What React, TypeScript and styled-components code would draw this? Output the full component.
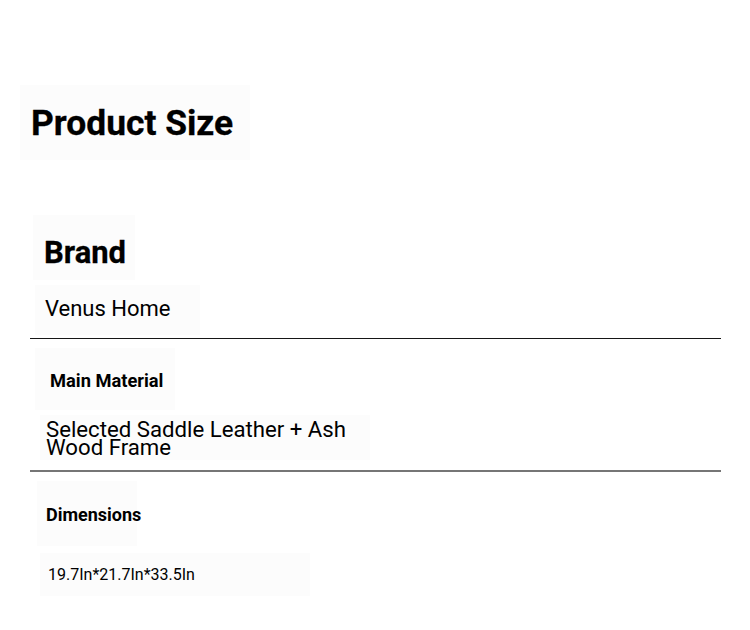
import React from 'react'
import styled, { createGlobalStyle } from 'styled-components';

const GlobalStyle = createGlobalStyle`
  body {
    margin: 0;
    background: #ffffff;
    font-family: Roboto, "Liberation Sans", sans-serif;
    color: #000000;
  }
`;

interface SpecItem {
  label: string;
  value: string;
};

const specs: SpecItem[] = [
  { label: 'Brand', value: 'Venus Home' },
  { label: 'Main Material', value: 'Selected Saddle Leather + Ash Wood Frame' },
  { label: 'Dimensions', value: '19.7In*21.7In*33.5In' },
];

const App = () => {
  return (
    <Page>
      <GlobalStyle />
      <TitleBox>
        <Title>Product Size</Title>
      </TitleBox>
      <SpecList>
        <SpecRow>
          <BrandLabel>{specs[0].label}</BrandLabel>
          <BrandValue>{specs[0].value}</BrandValue>
        </SpecRow>
        <Divider $dark />
        <SpecRow>
          <MaterialLabel>{specs[1].label}</MaterialLabel>
          <MaterialValue>{specs[1].value}</MaterialValue>
        </SpecRow>
        <Divider />
        <SpecRow>
          <DimensionLabel>{specs[2].label}</DimensionLabel>
          <DimensionValue>{specs[2].value}</DimensionValue>
        </SpecRow>
      </SpecList>
    </Page>
  )
};

export const Page = styled.div`
  width: 750px;
  height: 630px;
  overflow: hidden;
  padding-top: 85px;
  box-sizing: border-box;
`;

export const TitleBox = styled.div`
  width: 230px;
  height: 75px;
  margin-left: 20px;
  padding: 20px 0 0 11px;
  box-sizing: border-box;
  background: #fcfcfc;
`;

export const Title = styled.h2`
  margin: 0;
  font-size: 35.4px;
  font-weight: 700;
  line-height: 36px;
  -webkit-text-stroke: 0.3px #000;
`;

export const SpecList = styled.div`
  width: 691px;
  margin: 55px 0 0 30px;
  display: flex;
  flex-direction: column;
`;

export const SpecRow = styled.div`
  display: flex;
  flex-direction: column;
  align-items: flex-start;
`;

export const Divider = styled.div<{ $dark?: boolean }>`
  width: 100%;
  height: ${(props) => (props.$dark ? '1px' : '2px')};
  background: ${(props) => (props.$dark ? '#161616' : '#767676')};
  margin-top: ${(props) => (props.$dark ? '3px' : '10px')};
`;

const Cell = styled.div`
  box-sizing: border-box;
  background: #fcfcfc;
  line-height: 1;
`;

export const BrandLabel = styled(Cell)`
  margin-left: 3px;
  width: 102px;
  height: 65px;
  padding: 22px 0 0 11px;
  font-size: 31px;
  font-weight: 700;
  -webkit-text-stroke: 0.3px #000;
`;

export const BrandValue = styled(Cell)`
  margin: 5px 0 0 5px;
  width: 165px;
  height: 50px;
  padding: 13px 0 0 10px;
  font-size: 22px;
  font-weight: 400;
`;

export const MaterialLabel = styled(Cell)`
  margin: 9px 0 0 5px;
  width: 140px;
  height: 62px;
  padding: 24px 0 0 15px;
  font-size: 18.3px;
  font-weight: 700;
`;

export const MaterialValue = styled(Cell)`
  margin: 5px 0 0 10px;
  width: 330px;
  height: 45px;
  padding: 6px 16px 0 6px;
  font-size: 22.2px;
  font-weight: 400;
  line-height: 17.6px;
`;

export const DimensionLabel = styled(Cell)`
  margin: 9px 0 0 7px;
  width: 100px;
  height: 65px;
  padding: 25px 0 0 9px;
  font-size: 18px;
  font-weight: 700;
`;

export const DimensionValue = styled(Cell)`
  margin: 7px 0 0 10px;
  width: 270px;
  height: 43px;
  padding: 14px 0 0 8px;
  font-size: 16px;
  font-weight: 400;
`;

export default App;
